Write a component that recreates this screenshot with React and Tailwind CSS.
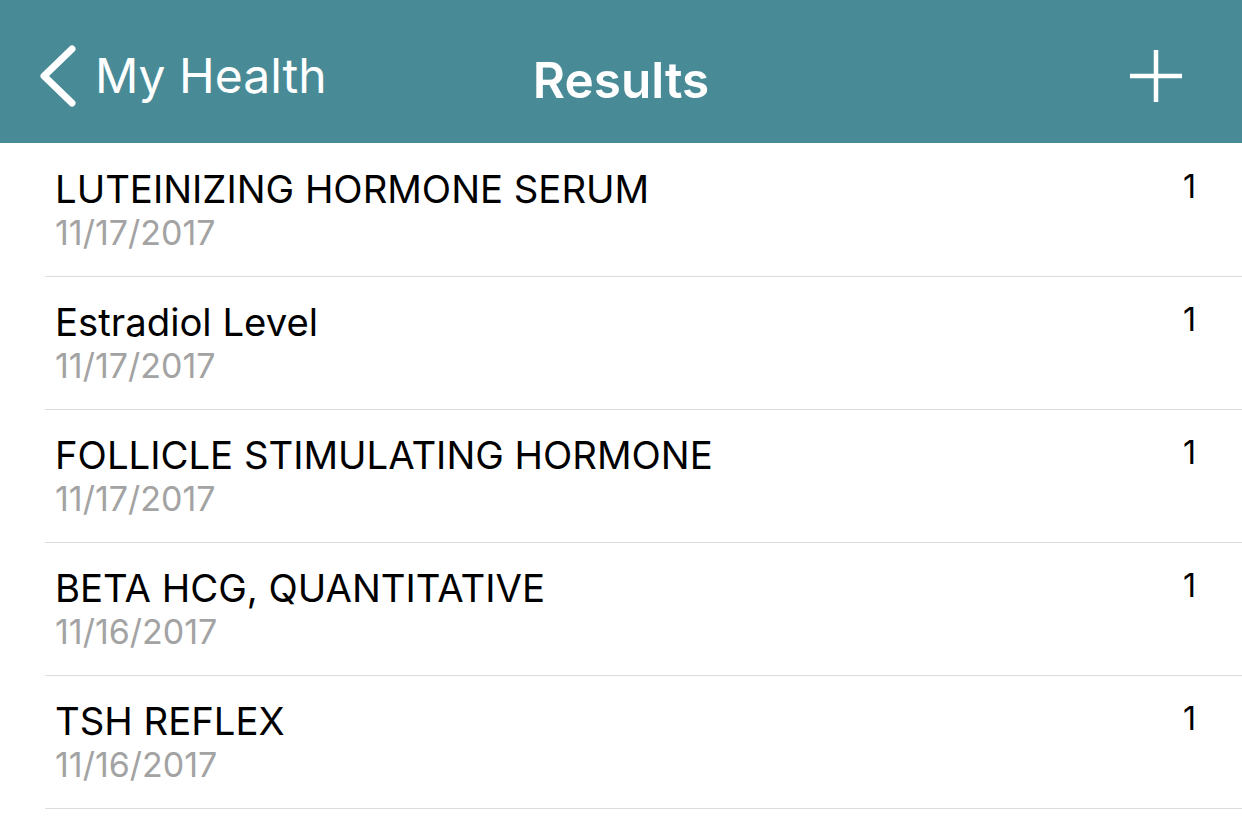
import React from "react";

const results = [
  { name: "LUTEINIZING HORMONE SERUM", date: "11/17/2017", count: 1 },
  { name: "Estradiol Level", date: "11/17/2017", count: 1 },
  { name: "FOLLICLE STIMULATING HORMONE", date: "11/17/2017", count: 1 },
  { name: "BETA HCG, QUANTITATIVE", date: "11/16/2017", count: 1 },
  { name: "TSH REFLEX", date: "11/16/2017", count: 1 },
];

const ResultRow = ({ name, date, count }) => (
  <div className="pl-[45px]">
    <div className="flex h-[133px] items-start justify-between border-b border-[#dcdcdc] pl-[10px] pr-[46px] pt-[21px]">
      <div className="flex flex-col">
        <span className="text-[38.3px] leading-[48px] text-black">{name}</span>
        <span className="text-[34px] leading-[40px] text-[#a3a3a3]">{date}</span>
      </div>
      <span className="mt-[2px] text-[32px] leading-[40px] text-black">{count}</span>
    </div>
  </div>
);

export default function App() {
  return (
    <div className="h-[816px] w-[1242px] overflow-hidden bg-white font-['Inter',sans-serif]">
      <header className="relative flex h-[143px] items-center bg-[#488b97] px-[38px] pt-[9px] text-white">
        <button className="flex items-center gap-[17px]">
          <svg width="40" height="62" viewBox="0 0 40 62" fill="none">
            <path d="M34 4 L6 31 L34 58" stroke="white" strokeWidth="7" strokeLinecap="round" strokeLinejoin="round" />
          </svg>
          <span className="text-[48px] leading-none">My Health</span>
        </button>
        <h1 className="absolute left-1/2 top-[9px] flex h-full -translate-x-1/2 items-center text-[49.5px] font-semibold leading-none">
          Results
        </h1>
        <svg className="ml-auto mr-[22px]" width="52" height="52" viewBox="0 0 52 52">
          <path d="M26 0 V52 M0 26 H52" stroke="white" strokeWidth="4.5" />
        </svg>
      </header>
      <div className="pt-[1px]">
        {results.map((r) => (
          <ResultRow key={r.name} {...r} />
        ))}
      </div>
    </div>
  );
}
